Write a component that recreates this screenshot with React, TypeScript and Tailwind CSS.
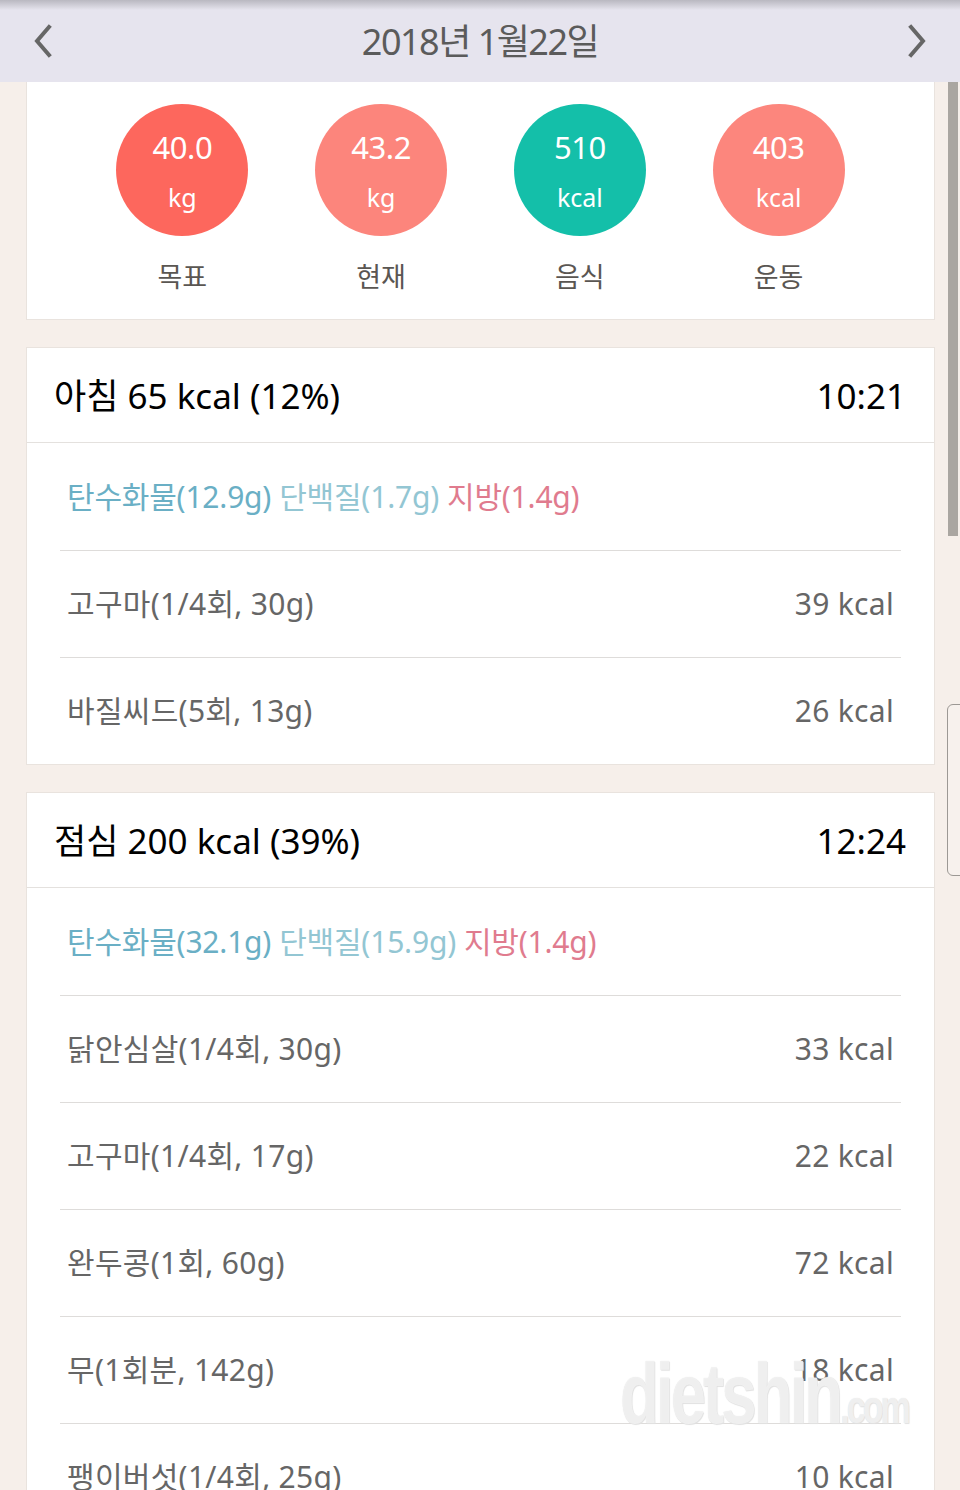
import React from 'react';

const font = { fontFamily: '"Noto Sans", "Noto Sans CJK KR", sans-serif' };

const stats = [
  { value: '40.0', unit: 'kg', label: '목표', color: 'bg-[#fd675d]' },
  { value: '43.2', unit: 'kg', label: '현재', color: 'bg-[#fc857c]' },
  { value: '510', unit: 'kcal', label: '음식', color: 'bg-[#14bfa9]' },
  { value: '403', unit: 'kcal', label: '운동', color: 'bg-[#fc867d]' },
];

const meals = [
  {
    title: '아침 65 kcal (12%)',
    time: '10:21',
    carbs: '탄수화물(12.9g)',
    protein: '단백질(1.7g)',
    fat: '지방(1.4g)',
    items: [
      { name: '고구마(1/4회, 30g)', kcal: '39 kcal' },
      { name: '바질씨드(5회, 13g)', kcal: '26 kcal' },
    ],
  },
  {
    title: '점심 200 kcal (39%)',
    time: '12:24',
    carbs: '탄수화물(32.1g)',
    protein: '단백질(15.9g)',
    fat: '지방(1.4g)',
    items: [
      { name: '닭안심살(1/4회, 30g)', kcal: '33 kcal' },
      { name: '고구마(1/4회, 17g)', kcal: '22 kcal' },
      { name: '완두콩(1회, 60g)', kcal: '72 kcal' },
      { name: '무(1회분, 142g)', kcal: '18 kcal' },
      { name: '팽이버섯(1/4회, 25g)', kcal: '10 kcal' },
    ],
  },
];

const Chevron = ({ dir }: { dir: 'left' | 'right' }) => (
  <svg width="22" height="34" viewBox="0 0 22 34" fill="none">
    <path
      d={dir === 'left' ? 'M17 3 L5 17 L17 31' : 'M5 3 L17 17 L5 31'}
      stroke="#666"
      strokeWidth="4"
      strokeLinecap="square"
    />
  </svg>
);

const App = () => {
  return (
    <div className="relative w-[960px] h-[1490px] overflow-hidden bg-[#f6efea]" style={font}>
      {/* top bar */}
      <div className="relative h-[82px] bg-[#e6e4ee] flex items-center justify-between px-[32px]">
        <div className="absolute top-0 left-0 right-0 h-[10px] bg-gradient-to-b from-[#b9b8c0] to-[#e6e4ee]" />
        <Chevron dir="left" />
        <span className="text-[36px] leading-none text-[#5b5b5b] tracking-[-1.5px] pt-[2px]">2018년 1월22일</span>
        <Chevron dir="right" />
      </div>

      {/* scrollbar */}
      <div className="absolute left-[948px] top-[82px] w-[10px] h-[454px] bg-[#aaa6a1]" />
      <div className="absolute left-[947px] top-[704px] w-[16px] h-[172px] rounded-l-[6px] border border-[#9c9894] bg-[#f7f1ed]" />

      <div className="w-[909px] ml-[26px] flex flex-col gap-[27px]">
        {/* summary card */}
        <div className="bg-white border border-[#e9e3de] border-t-0 h-[238px] px-[56px] pt-[22px] grid grid-cols-4">
          {stats.map((s) => (
            <div key={s.label} className="flex flex-col items-center">
              <div className={`w-[132px] h-[132px] rounded-full ${s.color} flex flex-col items-center justify-center text-white`}>
                <span className="text-[31px] leading-none tracking-[-0.5px] mt-[2px]">{s.value}</span>
                <span className="text-[25px] leading-none mt-[22px]">{s.unit}</span>
              </div>
              <span className="mt-[27px] text-[27px] leading-none text-[#5a5652]">{s.label}</span>
            </div>
          ))}
        </div>

        {meals.map((m) => (
          <div key={m.title} className="bg-white border border-[#e9e3de]">
            <div className="h-[95px] flex items-center justify-between pl-[27px] pr-[28px] border-b border-[#e4e1de]">
              <span className="text-[35px] leading-none text-black">{m.title}</span>
              <span className="text-[35px] leading-none text-black">{m.time}</span>
            </div>
            <div className="mx-[33px]">
              <div className="h-[107px] flex items-center px-[7px] text-[30px] leading-none gap-[8px] tracking-[-0.2px]">
                <span className="text-[#6aafc5]">{m.carbs}</span>
                <span className="text-[#93c6d3]">{m.protein}</span>
                <span className="text-[#e07b8e]">{m.fat}</span>
              </div>
              {m.items.map((it) => (
                <div
                  key={it.name}
                  className="h-[107px] flex items-center justify-between px-[7px] border-t border-[#dedcda] text-[30px] leading-none text-[#666] tracking-[0.3px]"
                >
                  <span>{it.name}</span>
                  <span>{it.kcal}</span>
                </div>
              ))}
            </div>
          </div>
        ))}
      </div>

      {/* watermark */}
      <div
        className="absolute left-[620px] top-[1350px] text-[86px] leading-none font-bold text-white/60 tracking-[-4px] origin-left scale-x-[0.74] pointer-events-none"
        style={{ fontFamily: '"Liberation Sans", sans-serif', textShadow: '0 0 1px #d8d8d8, 1px 1px 1px #e2e2e2' }}
      >
        dietshin<span className="text-[46px]">.com</span>
      </div>
    </div>
  );
};

export default App;
